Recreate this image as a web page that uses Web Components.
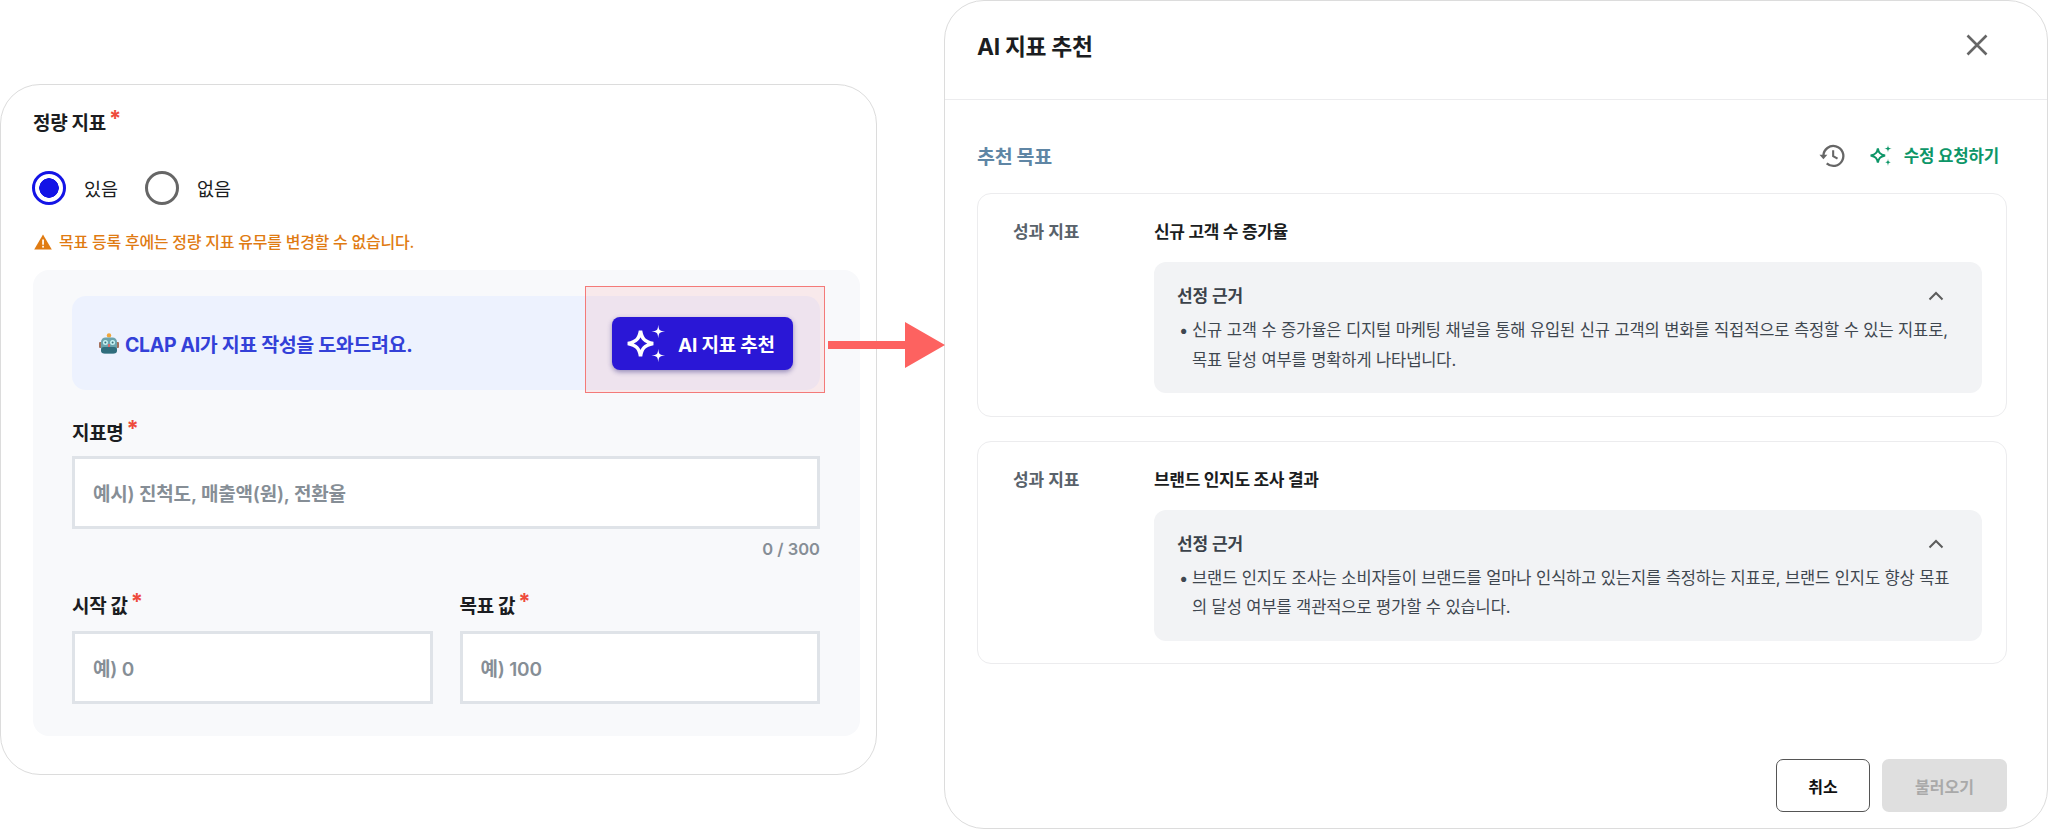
<!DOCTYPE html>
<html lang="ko">
<head>
<meta charset="utf-8">
<title>AI 지표 추천</title>
<style>
    html, body {
        margin: 0;
        height: 829px;
        overflow: hidden;
        background: white;
        font-family: Inter, "Noto Sans CJK KR", sans-serif;
        color: #1b1d21;
    }
    body {
        display: flex;
        align-items: flex-start;
        position: relative;
    }
</style>
</head>
<body>
<metric-form></metric-form>
<flow-arrow></flow-arrow>
<recommend-modal>
    <metric-card name="신규 고객 수 증가율" style="margin-bottom: 24px">
        신규 고객 수 증가율은 디지털 마케팅 채널을 통해 유입된 신규 고객의 변화를 직접적으로 측정할 수 있는 지표로,<br>목표 달성 여부를 명확하게 나타냅니다.
    </metric-card>
    <metric-card name="브랜드 인지도 조사 결과">
        브랜드 인지도 조사는 소비자들이 브랜드를 얼마나 인식하고 있는지를 측정하는 지표로, 브랜드 인지도 향상 목표<br>의 달성 여부를 객관적으로 평가할 수 있습니다.
    </metric-card>
</recommend-modal>

<script>
// big outlined star plus two small filled ones, viewBox 26x24
const smallStar = (cx, cy, fill) => {
    const r = 4.2, k = 0.8;
    return `<path d="M${cx} ${cy - r} C${cx + k * 0.4} ${cy - k} ${cx + k} ${cy - k * 0.4} ${cx + r} ${cy} C${cx + k} ${cy + k * 0.4} ${cx + k * 0.4} ${cy + k} ${cx} ${cy + r} C${cx - k * 0.4} ${cy + k} ${cx - k} ${cy + k * 0.4} ${cx - r} ${cy} C${cx - k} ${cy - k * 0.4} ${cx - k * 0.4} ${cy - k} ${cx} ${cy - r} Z" fill="${fill}"/>`;
};
const sparkle = (color) => `
    <path d="M9.6 4.2 C10.4 9 12 10.8 17.4 12 C12 13.2 10.4 15 9.6 19.8 C8.8 15 7.2 13.2 1.8 12 C7.2 10.8 8.8 9 9.6 4.2 Z" fill="none" stroke="${color}" stroke-width="2.2" stroke-linejoin="miter"/>
    ${smallStar(20.6, 4.6, color)}
    ${smallStar(20.6, 19.4, color)}`;

class FieldLabel extends HTMLElement {
    constructor() {
        super();
        this.attachShadow({mode: 'open'}).innerHTML = `
            <style>
                :host {
                    display: block;
                    font-size: 19px;
                    font-weight: 700;
                    line-height: 24px;
                    letter-spacing: -0.3px;
                    color: #1b1d21;
                }
                span {
                    color: #ee4b3c;
                    font-size: 22px;
                    line-height: 0;
                    position: relative;
                    top: -4px;
                    margin-left: 3px;
                }
            </style>
            <slot></slot><span>*</span>
        `;
    }
}

class TextBox extends HTMLElement {
    constructor() {
        super();
        this.attachShadow({mode: 'open'}).innerHTML = `
            <style>
                :host {
                    display: flex;
                    align-items: center;
                    box-sizing: border-box;
                    height: 73px;
                    padding: 0 18px;
                    background: white;
                    border: 3px solid #dfe3e8;
                    font-size: 19px;
                    font-weight: 600;
                    letter-spacing: -0.2px;
                    color: #868e96;
                }
            </style>
            <slot></slot>
        `;
    }
}

class RadioOption extends HTMLElement {
    constructor() {
        super();
        this.attachShadow({mode: 'open'}).innerHTML = `
            <style>
                :host {
                    display: flex;
                    align-items: center;
                    gap: 18px;
                    font-size: 18.5px;
                    color: #1b1d21;
                }
                i {
                    box-sizing: border-box;
                    width: 34px;
                    height: 34px;
                    border-radius: 50%;
                    border: 3px solid #666;
                }
                :host([checked]) i {
                    border-color: #1414e6;
                    background: radial-gradient(circle, #1414e6 0 9.5px, white 10px);
                }
            </style>
            <i></i><slot></slot>
        `;
    }
}

class MetricForm extends HTMLElement {
    constructor() {
        super();
        this.attachShadow({mode: 'open'}).innerHTML = `
            <style>
                :host {
                    display: block;
                    box-sizing: border-box;
                    flex: none;
                    width: 877px;
                    height: 691px;
                    margin-top: 84px;
                    padding: 27px 16px 0 32px;
                    border: 1.5px solid #dcdcdc;
                    border-left-width: 1px;
                    border-radius: 40px;
                    background: white;
                }
                .radios {
                    display: flex;
                    gap: 27px;
                    margin: 35px 0 0 -1px;
                }
                .warn {
                    display: flex;
                    align-items: center;
                    gap: 7px;
                    margin: 24px 0 0 1px;
                    font-size: 16px;
                    line-height: 26px;
                    font-weight: 500;
                    letter-spacing: -0.25px;
                    color: #e07b12;
                }
                .panel {
                    box-sizing: border-box;
                    height: 466px;
                    margin-top: 15px;
                    padding: 26px 40px 0 39px;
                    border-radius: 16px;
                    background: #f8f9fb;
                }
                .banner {
                    position: relative;
                    display: flex;
                    align-items: center;
                    justify-content: space-between;
                    box-sizing: border-box;
                    height: 94px;
                    padding: 0 27px 0 27px;
                    border-radius: 14px;
                    background: #edf2fe;
                    font-size: 19.5px;
                    font-weight: 700;
                    letter-spacing: -0.35px;
                    color: #3340d8;
                }
                .banner .lead {
                    display: flex;
                    align-items: center;
                    gap: 6px;
                }
                button {
                    position: relative;
                    z-index: 1;
                    display: flex;
                    align-items: center;
                    gap: 11px;
                    width: 181px;
                    height: 53px;
                    padding: 0 0 0 13px;
                    border: none;
                    border-radius: 8px;
                    background: #2a17d6;
                    box-shadow: 0 2px 5px rgba(40, 30, 120, 0.45);
                    color: white;
                    font-family: inherit;
                    font-size: 19px;
                    font-weight: 700;
                    letter-spacing: -0.2px;
                }
                .mark {
                    position: absolute;
                    top: -10px;
                    right: -5px;
                    width: 240px;
                    height: 107px;
                    box-sizing: border-box;
                    border: 1.5px solid #f47a78;
                    background: rgba(255, 95, 95, 0.1);
                }
                .name {
                    margin-top: 32px;
                }
                text-box {
                    margin-top: 12px;
                }
                .name + text-box {
                    margin-top: 10px;
                }
                .count {
                    margin-top: 8px;
                    text-align: right;
                    font-size: 16.5px;
                    font-weight: 600;
                    line-height: 24px;
                    color: #868e96;
                }
                .pair {
                    display: grid;
                    grid-template-columns: 1fr 1fr;
                    gap: 27px;
                    margin-top: 34px;
                }
            </style>
            <field-label>정량 지표</field-label>
            <div class="radios">
                <radio-option checked>있음</radio-option>
                <radio-option>없음</radio-option>
            </div>
            <div class="warn">
                <svg width="18" height="16" viewBox="0 0 18 16"><path d="M9 0.5 L17.8 15.6 H0.2 Z" fill="#e07b12"/><rect x="8.2" y="5.5" width="1.7" height="5.2" fill="white"/><rect x="8.2" y="11.8" width="1.7" height="1.8" fill="white"/></svg>
                목표 등록 후에는 정량 지표 유무를 변경할 수 없습니다.
            </div>
            <div class="panel">
                <div class="banner">
                    <span class="lead">
                        <svg width="20" height="21" viewBox="0 0 20 21">
                            <circle cx="10" cy="2.4" r="2.2" fill="#f0a63c"/>
                            <rect x="0" y="9" width="3" height="6" rx="1" fill="#a5715c"/>
                            <rect x="17" y="9" width="3" height="6" rx="1" fill="#a5715c"/>
                            <rect x="2" y="4.5" width="16" height="16" rx="4.5" fill="#6ba4ae"/>
                            <rect x="2" y="14" width="16" height="6.5" rx="3" fill="#2f6d7c"/>
                            <circle cx="6.4" cy="9.6" r="2.5" fill="#c6f2f3"/>
                            <circle cx="13.6" cy="9.6" r="2.5" fill="#c6f2f3"/>
                            <circle cx="6.4" cy="9.6" r="1" fill="#3a6f7a"/>
                            <circle cx="13.6" cy="9.6" r="1" fill="#3a6f7a"/>
                            <rect x="9" y="11" width="2" height="3" fill="#d66a6a"/>
                        </svg>
                        CLAP AI가 지표 작성을 도와드려요.
                    </span>
                    <button type="button">
                        <svg width="42" height="39" viewBox="0 0 26 24">${sparkle('white')}</svg>
                        AI 지표 추천
                    </button>
                    <div class="mark"></div>
                </div>
                <field-label class="name">지표명</field-label>
                <text-box>예시) 진척도, 매출액(원), 전환율</text-box>
                <div class="count">0 / 300</div>
                <div class="pair">
                    <div><field-label>시작 값</field-label><text-box>예) 0</text-box></div>
                    <div><field-label>목표 값</field-label><text-box>예) 100</text-box></div>
                </div>
            </div>
        `;
    }
}

class FlowArrow extends HTMLElement {
    constructor() {
        super();
        this.attachShadow({mode: 'open'}).innerHTML = `
            <style>
                :host {
                    position: absolute;
                    left: 828px;
                    top: 322px;
                    width: 117px;
                    height: 46px;
                    z-index: 2;
                }
                svg { display: block; }
            </style>
            <svg width="117" height="46" viewBox="0 0 117 46"><path d="M0 19 H77 V0 L117 23 L77 46 V27 H0 Z" fill="#fd6260"/></svg>
        `;
    }
}

class MetricCard extends HTMLElement {
    constructor() {
        super();
        this.attachShadow({mode: 'open'}).innerHTML = `
            <style>
                :host {
                    display: grid;
                    grid-template-columns: 141px 1fr;
                    box-sizing: border-box;
                    height: 223.5px;
                    padding: 26px 24px 0 35px;
                    border: 1.5px solid #ececee;
                    border-radius: 14px;
                    background: white;
                }
                .label {
                    font-size: 17px;
                    font-weight: 600;
                    line-height: 24px;
                    letter-spacing: -0.1px;
                    color: #59626b;
                }
                .name {
                    font-size: 17px;
                    font-weight: 700;
                    line-height: 24px;
                    letter-spacing: -0.3px;
                    color: #1b1d21;
                }
                .reason {
                    box-sizing: border-box;
                    height: 131px;
                    margin-top: 18px;
                    padding: 21px 24px 0 23px;
                    border-radius: 12px;
                    background: #f2f3f5;
                }
                .head {
                    display: flex;
                    align-items: center;
                    justify-content: space-between;
                    padding-right: 12px;
                    font-size: 17px;
                    font-weight: 600;
                    line-height: 26px;
                    letter-spacing: -0.2px;
                    color: #3b424a;
                }
                .body {
                    display: flex;
                    margin-top: 7px;
                    font-size: 16.5px;
                    line-height: 29.5px;
                    letter-spacing: -0.1px;
                    color: #3f4750;
                    white-space: nowrap;
                }
                .body b {
                    flex: none;
                    width: 15px;
                    padding-left: 2px;
                    box-sizing: border-box;
                    font-weight: 400;
                }
            </style>
            <div class="label">성과 지표</div>
            <div>
                <div class="name">${this.getAttribute('name')}</div>
                <div class="reason">
                    <div class="head">
                        선정 근거
                        <svg width="20" height="20" viewBox="0 0 20 20"><path d="M3.5 13.5 L10 7 L16.5 13.5" fill="none" stroke="#5c5c5c" stroke-width="2"/></svg>
                    </div>
                    <div class="body"><b>•</b><span><slot></slot></span></div>
                </div>
            </div>
        `;
    }
}

class RecommendModal extends HTMLElement {
    constructor() {
        super();
        this.attachShadow({mode: 'open'}).innerHTML = `
            <style>
                :host {
                    display: flex;
                    flex-direction: column;
                    box-sizing: border-box;
                    flex: none;
                    width: 1104px;
                    height: 829px;
                    margin-left: 67px;
                    border: 1.5px solid #dcdcdc;
                    border-radius: 40px;
                    background: white;
                }
                header {
                    display: flex;
                    align-items: center;
                    justify-content: space-between;
                    box-sizing: border-box;
                    flex: none;
                    height: 99px;
                    padding: 0 58px 10px 32px;
                    border-bottom: 1.5px solid #ececee;
                    font-size: 22.8px;
                    font-weight: 700;
                    letter-spacing: -0.3px;
                }
                .section {
                    display: flex;
                    align-items: center;
                    justify-content: space-between;
                    height: 30px;
                    margin: 40px 48px 23px 32px;
                }
                .section h2 {
                    margin: 0;
                    font-size: 19.5px;
                    font-weight: 700;
                    letter-spacing: -0.3px;
                    color: #5f86a5;
                }
                .actions {
                    display: flex;
                    align-items: center;
                    font-size: 16.8px;
                    font-weight: 700;
                    letter-spacing: -0.2px;
                    color: #0d9668;
                }
                .actions .clock {
                    margin-right: 24px;
                }
                .actions .star {
                    margin-right: 11px;
                }
                .cards {
                    flex: 1;
                    padding: 0 40px 0 32px;
                }
                footer {
                    display: flex;
                    align-items: flex-start;
                    justify-content: flex-end;
                    gap: 12px;
                    flex: none;
                    height: 69px;
                    padding-right: 40px;
                }
                footer button {
                    height: 53px;
                    border-radius: 7px;
                    font-family: inherit;
                    font-size: 16px;
                    font-weight: 700;
                }
                .cancel {
                    width: 94px;
                    background: white;
                    border: 1.5px solid #555;
                    color: #111;
                }
                .load {
                    width: 125px;
                    background: #dfdfdf;
                    border: none;
                    color: #a9a9a9;
                }
            </style>
            <header>
                AI 지표 추천
                <svg width="24" height="24" viewBox="0 0 24 24"><path d="M2.5 2.5 L21.5 21.5 M21.5 2.5 L2.5 21.5" stroke="#666" stroke-width="2.6" fill="none"/></svg>
            </header>
            <div class="section">
                <h2>추천 목표</h2>
                <div class="actions">
                    <svg class="clock" width="27" height="27" viewBox="0 0 26 26" fill="none">
                        <path d="M5.2 13.2 A9.6 9.6 0 1 1 8.4 20.6" stroke="#666" stroke-width="2.2"/>
                        <path d="M1.4 12.2 H9 L5.2 16.6 Z" fill="#666"/>
                        <path d="M14.6 8 V13.6 L18.8 16" stroke="#666" stroke-width="2"/>
                    </svg>
                    <svg class="star" width="24" height="23" viewBox="0 0 26 24">${sparkle('#0d9668')}</svg>
                    수정 요청하기
                </div>
            </div>
            <div class="cards"><slot></slot></div>
            <footer>
                <button class="cancel" type="button">취소</button>
                <button class="load" type="button">불러오기</button>
            </footer>
        `;
    }
}

customElements.define('field-label', FieldLabel);
customElements.define('text-box', TextBox);
customElements.define('radio-option', RadioOption);
customElements.define('metric-form', MetricForm);
customElements.define('flow-arrow', FlowArrow);
customElements.define('metric-card', MetricCard);
customElements.define('recommend-modal', RecommendModal);
</script>
</body>
</html>
